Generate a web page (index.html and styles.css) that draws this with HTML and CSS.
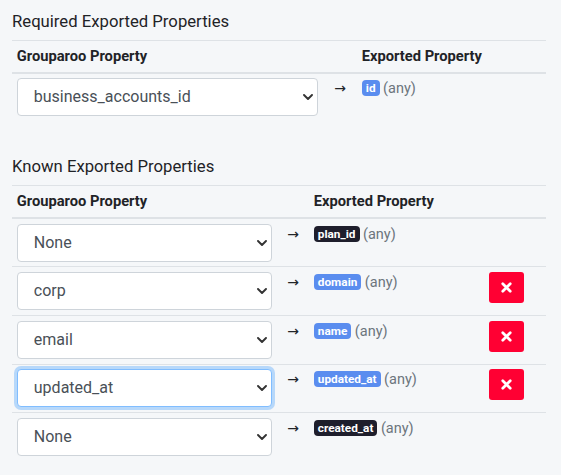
FILE: index.html
```html
<!DOCTYPE html>
<html lang="en">
<head>
<meta charset="utf-8">
<title>Exported Properties</title>
<link rel="stylesheet" href="styles.css">
</head>
<body>
<section class="section">
  <h2 class="title">Required Exported Properties</h2>
  <table class="tbl tbl-req">
    <colgroup><col class="c-req-prop"><col class="c-req-arrow"><col></colgroup>
    <thead>
      <tr><th>Grouparoo Property</th><th></th><th>Exported Property</th></tr>
    </thead>
    <tbody>
      <tr>
        <td><span class="sel"><select class="ctl"><option>business_accounts_id</option></select><svg class="chev" width="10" height="6" viewBox="0 0 10 6"><path d="M1 1l4 4 4-4" fill="none" stroke="#333" stroke-width="1.9" stroke-linecap="round" stroke-linejoin="round"/></svg></span></td>
        <td class="arrow">→</td>
        <td><span class="badge blue">id</span> <span class="muted">(any)</span></td>
      </tr>
    </tbody>
  </table>
</section>

<section class="section section-known">
  <h2 class="title">Known Exported Properties</h2>
  <table class="tbl tbl-known">
    <colgroup><col class="c-k-prop"><col class="c-k-arrow"><col><col class="c-k-act"></colgroup>
    <thead>
      <tr><th>Grouparoo Property</th><th></th><th>Exported Property</th><th></th></tr>
    </thead>
    <tbody>
      <tr>
        <td><span class="sel"><select class="ctl"><option>None</option></select><svg class="chev" width="10" height="6" viewBox="0 0 10 6"><path d="M1 1l4 4 4-4" fill="none" stroke="#333" stroke-width="1.9" stroke-linecap="round" stroke-linejoin="round"/></svg></span></td>
        <td class="arrow">→</td>
        <td><span class="badge dark">plan_id</span> <span class="muted">(any)</span></td>
        <td></td>
      </tr>
      <tr>
        <td><span class="sel"><select class="ctl"><option>corp</option></select><svg class="chev" width="10" height="6" viewBox="0 0 10 6"><path d="M1 1l4 4 4-4" fill="none" stroke="#333" stroke-width="1.9" stroke-linecap="round" stroke-linejoin="round"/></svg></span></td>
        <td class="arrow">→</td>
        <td><span class="badge blue">domain</span> <span class="muted">(any)</span></td>
        <td><button class="del" type="button"><svg width="11" height="11" viewBox="0 0 10 10"><path d="M1.6 1.6l6.8 6.8M8.4 1.6l-6.8 6.8" stroke="#fff" stroke-width="2.5" stroke-linecap="round"/></svg></button></td>
      </tr>
      <tr>
        <td><span class="sel"><select class="ctl"><option>email</option></select><svg class="chev" width="10" height="6" viewBox="0 0 10 6"><path d="M1 1l4 4 4-4" fill="none" stroke="#333" stroke-width="1.9" stroke-linecap="round" stroke-linejoin="round"/></svg></span></td>
        <td class="arrow">→</td>
        <td><span class="badge blue">name</span> <span class="muted">(any)</span></td>
        <td><button class="del" type="button"><svg width="11" height="11" viewBox="0 0 10 10"><path d="M1.6 1.6l6.8 6.8M8.4 1.6l-6.8 6.8" stroke="#fff" stroke-width="2.5" stroke-linecap="round"/></svg></button></td>
      </tr>
      <tr>
        <td><span class="sel"><select class="ctl focus"><option>updated_at</option></select><svg class="chev" width="10" height="6" viewBox="0 0 10 6"><path d="M1 1l4 4 4-4" fill="none" stroke="#333" stroke-width="1.9" stroke-linecap="round" stroke-linejoin="round"/></svg></span></td>
        <td class="arrow">→</td>
        <td><span class="badge blue">updated_at</span> <span class="muted">(any)</span></td>
        <td><button class="del" type="button"><svg width="11" height="11" viewBox="0 0 10 10"><path d="M1.6 1.6l6.8 6.8M8.4 1.6l-6.8 6.8" stroke="#fff" stroke-width="2.5" stroke-linecap="round"/></svg></button></td>
      </tr>
      <tr>
        <td><span class="sel"><select class="ctl"><option>None</option></select><svg class="chev" width="10" height="6" viewBox="0 0 10 6"><path d="M1 1l4 4 4-4" fill="none" stroke="#333" stroke-width="1.9" stroke-linecap="round" stroke-linejoin="round"/></svg></span></td>
        <td class="arrow">→</td>
        <td><span class="badge dark">created_at</span> <span class="muted">(any)</span></td>
        <td></td>
      </tr>
    </tbody>
  </table>
</section>
</body>
</html>
```

FILE: styles.css
```css
* { box-sizing: border-box; }

html, body {
  margin: 0;
  background: #f5f7f9;
}

body {
  padding: 11px 15px 0 12px;
  font-family: Roboto, "Liberation Sans", sans-serif;
  color: #212529;
  font-size: 14px;
  line-height: 1.5;
}

.section-known { margin-top: 35px; }

.title {
  margin: 0 0 8px;
  font-size: 16.7px;
  line-height: 21px;
  font-weight: 400;
  color: #1f2327;
}

.tbl {
  width: 534px;
  border-collapse: collapse;
  table-layout: fixed;
}

.c-req-prop { width: 311px; }
.c-req-arrow { width: 34px; }
.c-k-prop { width: 265px; }
.c-k-arrow { width: 32px; }
.c-k-act { width: 61px; }

.tbl th {
  text-align: left;
  font-weight: 700;
  font-size: 14.7px;
  line-height: 21px;
  padding: 4.8px;
  border-top: 1px solid #dee2e6;
  border-bottom: 2px solid #dee2e6;
  vertical-align: bottom;
  color: #1f2327;
}

.tbl td {
  padding: 4.8px;
  border-top: 1px solid #dee2e6;
  vertical-align: top;
  line-height: 21px;
}

.tbl tbody tr:first-child td { border-top: 0; }

.arrow {
  text-align: center;
  font-family: "DejaVu Sans", sans-serif;
  font-size: 14px;
  color: #212529;
}

.sel {
  position: relative;
  display: block;
}

.ctl {
  display: block;
  width: 100%;
  height: 38px;
  padding: 6px 24px 6px 16px;
  font-family: Roboto, "Liberation Sans", sans-serif;
  font-size: 16px;
  line-height: 24px;
  color: #495057;
  background: #fff;
  border: 1px solid #ced4da;
  border-radius: 4px;
  -webkit-appearance: none;
  appearance: none;
  outline: none;
}

.ctl.focus {
  border-color: #80bdff;
  box-shadow: 0 0 0 3px rgba(0, 123, 255, 0.25);
}

.chev {
  position: absolute;
  right: 5px;
  top: 16px;
  pointer-events: none;
}

.badge {
  display: inline-block;
  padding: 2px 4px;
  font-size: 11.8px;
  font-weight: 700;
  line-height: 12px;
  color: #fff;
  border-radius: 4px;
  vertical-align: 1px;
}

.badge.blue { background: #5a8def; }
.badge.dark { background: #1e1e2c; }

.muted { color: #6c757d; font-size: 14.5px; }

.del {
  display: flex;
  align-items: center;
  justify-content: center;
  width: 35px;
  height: 31px;
  padding: 0;
  margin-left: -0.8px;
  border: 0;
  border-radius: 3px;
  background: #ff0033;
}

.del svg { display: block; }
```
